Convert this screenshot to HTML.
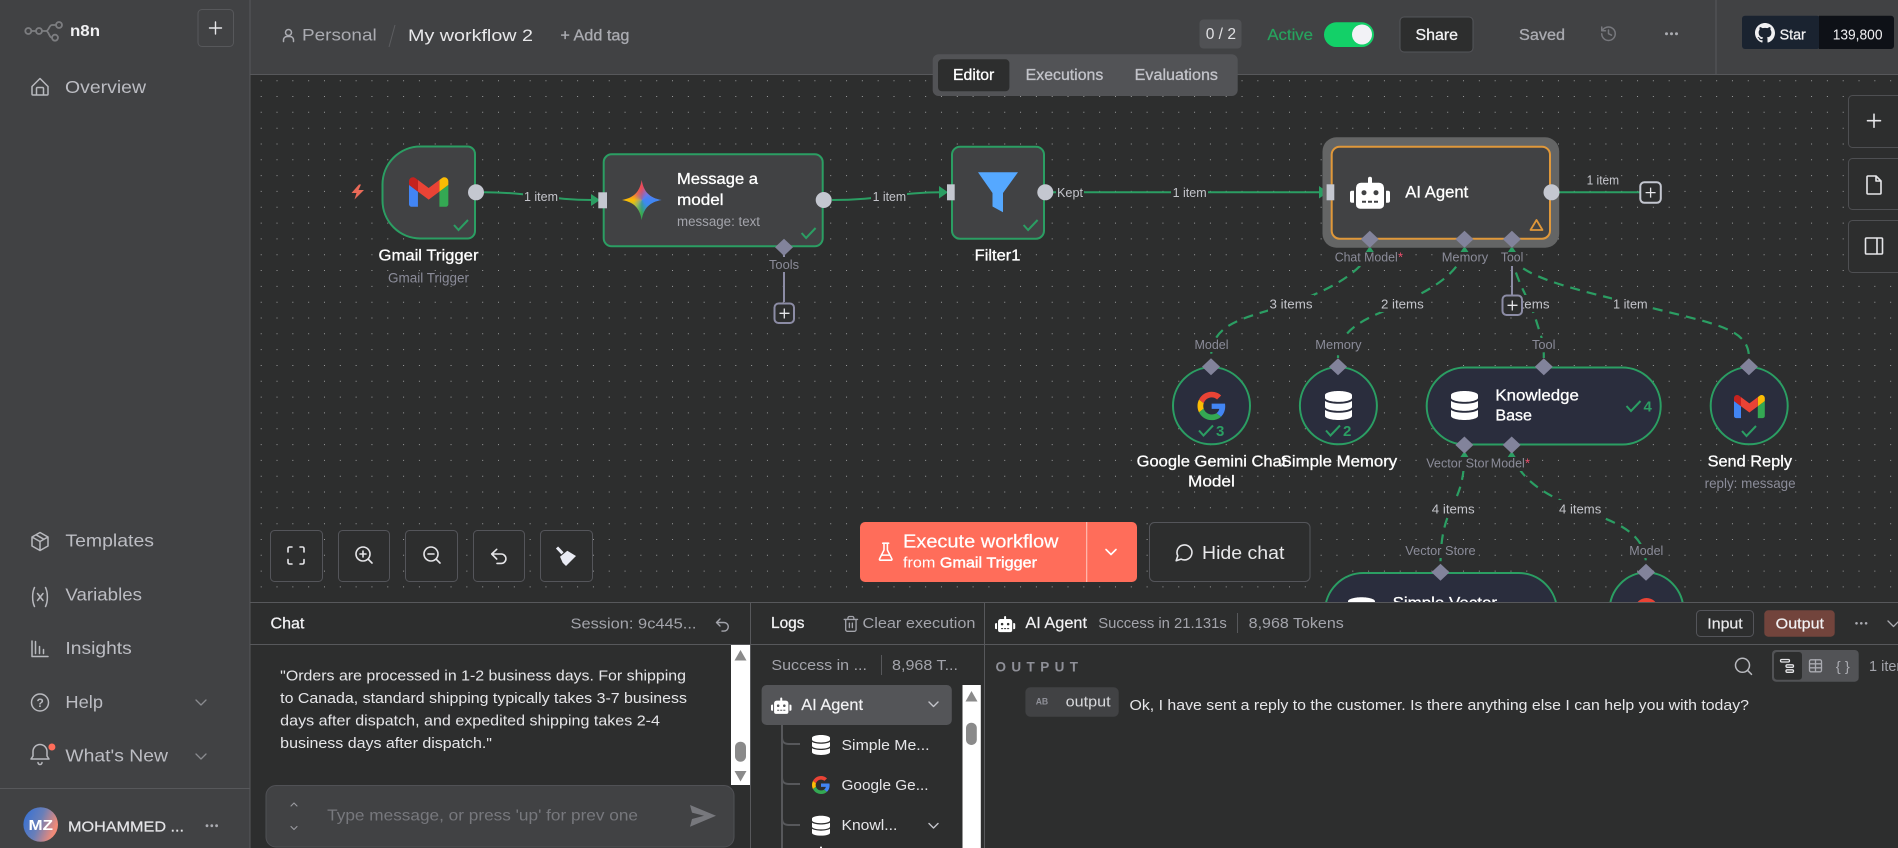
<!DOCTYPE html>
<html lang="en"><head><meta charset="utf-8"><title>My workflow 2 - n8n</title>
<style>
html,body{margin:0;padding:0;background:#2d2e2e;width:1898px;height:848px;overflow:hidden}
svg{display:block;position:absolute;left:0;top:0}
text{font-family:"Liberation Sans",sans-serif;white-space:pre}
.nav{font-size:17.5px;fill:#bcbdc3}
.s{font-size:13px;fill:#8b8c99}
.e{font-size:13px;fill:#c4c5cb}
.t{font-size:16px;fill:#fff;stroke:#fff;stroke-width:.3}
.h{font-size:16px;fill:#aaabb1}
.hm{font-size:15.5px;fill:#aaabb1;stroke:#aaabb1;stroke-width:.3}
.p{font-size:15px;fill:#e6e6e9}
.g{font-size:15px;fill:#a3a4ab}
.ic{fill:none;stroke-linecap:round;stroke-linejoin:round}
</style></head><body>
<svg width="1898" height="848" viewBox="0 0 1898 848" xmlns="http://www.w3.org/2000/svg">
<defs>
<polygon id="d" points="0,-8.5 9,0 0,8.5 -9,0" fill="#82839b"/>
<path id="chk" d="M-7 0L-2.5 5L7-5" fill="none" stroke="#2b9e63" stroke-width="2"/>
<g id="plusbox"><rect x="-9.5" y="-9.5" width="19.5" height="19.5" rx="4" fill="#2d2e2e" stroke="#8c8ca5" stroke-width="2"/><path d="M-4.5 0.3h10M0.3-4.5v10" stroke="#e6e6e9" stroke-width="1.3"/></g>
<g id="gm"><path fill="#4285f4" d="M58 108h14V74L52 59v43c0 3.32 2.69 6 6 6"/><path fill="#34a853" d="M120 108h14c3.32 0 6-2.69 6-6V59l-20 15"/><path fill="#fbbc04" d="M120 48v26l20-15v-8c0-7.42-8.47-11.65-14.4-7.2"/><path fill="#ea4335" d="M72 74V48l24 18 24-18v26L96 92"/><path fill="#c5221f" d="M52 51v8l20 15V48l-5.6-4.2c-5.94-4.45-14.4-.22-14.4 7.2"/></g>
<g id="gg"><path fill="#EA4335" d="M24 9.5c3.54 0 6.71 1.22 9.21 3.6l6.85-6.85C35.9 2.38 30.47 0 24 0 14.62 0 6.51 5.38 2.56 13.22l7.98 6.19C12.43 13.72 17.74 9.5 24 9.5z"/><path fill="#4285F4" d="M46.98 24.55c0-1.57-.15-3.09-.38-4.55H24v9.02h12.94c-.58 2.96-2.26 5.48-4.78 7.18l7.73 6c4.51-4.18 7.09-10.36 7.09-17.65z"/><path fill="#FBBC05" d="M10.53 28.59c-.48-1.45-.76-2.99-.76-4.59s.27-3.14.76-4.59l-7.98-6.19C.92 16.46 0 20.12 0 24c0 3.88.92 7.54 2.56 10.78l7.97-6.19z"/><path fill="#34A853" d="M24 48c6.48 0 11.93-2.13 15.89-5.81l-7.73-6c-2.15 1.45-4.92 2.3-8.16 2.3-6.26 0-11.57-4.22-13.47-9.91l-7.98 6.19C6.51 42.62 14.62 48 24 48z"/></g>
<path id="db" fill="#fff" d="M448 73.143v45.714C448 159.143 347.667 192 224 192S0 159.143 0 118.857V73.143C0 32.857 100.333 0 224 0s224 32.857 224 73.143zM448 176v102.857C448 319.143 347.667 352 224 352S0 319.143 0 278.857V176c48.125 33.143 136.208 48.572 224 48.572S399.874 209.143 448 176zm0 160v102.857C448 479.143 347.667 512 224 512S0 479.143 0 438.857V336c48.125 33.143 136.208 48.572 224 48.572S399.874 369.143 448 336z"/>
<path id="robot" fill="#fff" d="M32,224H64V416H32A31.96166,31.96166,0,0,1,0,384V256A31.96166,31.96166,0,0,1,32,224Zm512-48V448a64.06328,64.06328,0,0,1-64,64H160a64.06328,64.06328,0,0,1-64-64V176a79.974,79.974,0,0,1,80-80H288V32a32,32,0,0,1,64,0V96H464A79.974,79.974,0,0,1,544,176ZM264,256a40,40,0,1,0-40,40A39.997,39.997,0,0,0,264,256Zm-8,128H192v32h64Zm96,0H288v32h64ZM456,256a40,40,0,1,0-40,40A39.997,39.997,0,0,0,456,256Zm-8,128H384v32h64ZM640,256V384a31.96166,31.96166,0,0,1-32,32H576V224h32A31.96166,31.96166,0,0,1,640,256Z"/>
<linearGradient id="av" x1="0" x2="1" y1="0" y2=".4"><stop offset="0" stop-color="#2f6fd8"/><stop offset=".55" stop-color="#6a7fb8"/><stop offset="1" stop-color="#f08a78"/></linearGradient>
</defs>

<!-- canvas -->
<rect x="250" y="74" width="1648" height="530" fill="#2d2e2e"/>
<path fill="none" stroke="#9a9b9c" stroke-width="1" stroke-dasharray="1 14.82" d="M260.7 80.7H1898M260.7 96.5H1898M260.7 112.3H1898M260.7 128.2H1898M260.7 144H1898M260.7 159.8H1898M260.7 175.6H1898M260.7 191.4H1898M260.7 207.3H1898M260.7 223.1H1898M260.7 238.9H1898M260.7 254.7H1898M260.7 270.5H1898M260.7 286.4H1898M260.7 302.2H1898M260.7 318H1898M260.7 333.8H1898M260.7 349.6H1898M260.7 365.5H1898M260.7 381.3H1898M260.7 397.1H1898M260.7 412.9H1898M260.7 428.7H1898M260.7 444.6H1898M260.7 460.4H1898M260.7 476.2H1898M260.7 492H1898M260.7 507.8H1898M260.7 523.7H1898M260.7 539.5H1898M260.7 555.3H1898M260.7 571.1H1898M260.7 586.9H1898"/>

<!-- solid edges -->
<g fill="none" stroke="#2b9e63" stroke-width="2">
<path d="M484 192.3C530 192.3 550 200 592 200"/>
<path d="M832 200C880 200 900 192.3 941 192.3"/>
<path d="M1053 192.3H1322"/>
<path d="M1559 192.3H1640"/>
</g>
<g fill="#2b9e63"><polygon points="591,194 600,200 591,206"/><polygon points="939,186 948,192.3 939,198.5"/><polygon points="1319,186 1328,192.3 1319,198.5"/></g>

<!-- dashed edges -->
<g fill="none" stroke="#2b9e63" stroke-width="2.2" stroke-dasharray="10 7">
<path d="M1369.8 252C1360 275 1320 295 1280 307S1211 325 1211 358"/>
<path d="M1464.5 252C1455 278 1425 292 1400 304S1338 325 1338 358"/>
<path d="M1512 256C1515 280 1530 300 1536 320S1543.8 340 1543.8 358"/>
<path d="M1512 256C1520 280 1600 295 1660 310S1749 330 1749 358"/>
<path d="M1464.4 453C1464.4 510 1440.5 500 1440.5 565"/>
<path d="M1511.7 453C1520 480 1545 495 1578 508S1646 530 1646 565"/>
</g>
<g fill="#2b9e63"><polygon points="1365.8,252 1373.8,252 1369.8,246"/><polygon points="1460.5,252 1468.5,252 1464.5,246"/><polygon points="1507.9,252 1515.9,252 1511.9,246"/><polygon points="1460.4,457 1468.4,457 1464.4,451"/><polygon points="1507.7,457 1515.7,457 1511.7,451"/></g>
<path d="M784 255V302M1512 262V295" stroke="#8c8ca5" stroke-width="2"/>

<!-- edge label backgrounds -->
<g fill="#2d2e2e">
<rect x="523" y="188" width="36" height="16"/><rect x="871" y="188" width="36" height="16"/><rect x="1056" y="184" width="28" height="16"/><rect x="1171" y="184" width="37" height="16"/>
<rect x="1268" y="295" width="46" height="17"/><rect x="1380" y="295" width="45" height="17"/><rect x="1506" y="295" width="44" height="17"/><rect x="1612" y="295" width="37" height="17"/>
<rect x="1431" y="500" width="45" height="17"/><rect x="1558" y="500" width="44" height="17"/>
</g>
<g>
<text class="e" lengthAdjust="spacingAndGlyphs" x="524" y="201" textLength="34">1 item</text>
<text class="e" lengthAdjust="spacingAndGlyphs" x="872.6" y="201" textLength="33.5">1 item</text>
<text class="e" lengthAdjust="spacingAndGlyphs" x="1057" y="197" textLength="26">Kept</text>
<text class="e" lengthAdjust="spacingAndGlyphs" x="1172.6" y="197" textLength="34">1 item</text>
<text class="e" lengthAdjust="spacingAndGlyphs" x="1586.6" y="184.5" textLength="32.5">1 item</text>
<text class="e" lengthAdjust="spacingAndGlyphs" x="1269.5" y="308.3" textLength="43">3 items</text>
<text class="e" lengthAdjust="spacingAndGlyphs" x="1381" y="308.3" textLength="42.7">2 items</text>
<text class="e" lengthAdjust="spacingAndGlyphs" x="1506.5" y="308.3" textLength="43">4 items</text>
<text class="e" lengthAdjust="spacingAndGlyphs" x="1613" y="308.3" textLength="34.6">1 item</text>
<text class="e" lengthAdjust="spacingAndGlyphs" x="1431.8" y="513.3" textLength="42.8">4 items</text>
<text class="e" lengthAdjust="spacingAndGlyphs" x="1559" y="513.3" textLength="42.3">4 items</text>
</g>

<!-- Gmail Trigger -->
<path d="M420.5 146.5H467.5a7.5 7.5 0 0 1 7.5 7.5V231a7.5 7.5 0 0 1-7.5 7.5H420.5A38 38 0 0 1 382.5 200.5V184.5A38 38 0 0 1 420.5 146.5Z" fill="#414244" stroke="#2b9e63" stroke-width="2"/>
<use href="#gm" transform="translate(409 177.3) scale(.447) translate(-52 -42)"/>
<use href="#chk" x="461" y="225"/>
<circle cx="476" cy="192.3" r="8" fill="#c4c7d0"/>
<path d="M359 184.5L351.5 193H356.5L354.5 199.5L364 190H358.5L361 184.5Z" fill="#ea6a58"/>
<text class="t" lengthAdjust="spacingAndGlyphs" x="378.5" y="260.7" textLength="100">Gmail Trigger</text>
<text class="s" lengthAdjust="spacingAndGlyphs" style="font-size:14px" x="388" y="282.5" textLength="81">Gmail Trigger</text>

<!-- Message a model -->
<rect x="603.7" y="154.3" width="219" height="92" rx="8" fill="#414244" stroke="#2b9e63" stroke-width="2"/>
<foreignObject x="621.7" y="180" width="40" height="40"><div xmlns="http://www.w3.org/1999/xhtml" style="width:40px;height:40px;clip-path:path('M20 0C22 12 28 18 40 20C28 22 22 28 20 40C18 28 12 22 0 20C12 18 18 12 20 0Z');background:radial-gradient(circle at 65% 52%,rgba(66,133,244,.95) 0,rgba(66,133,244,0) 14px),conic-gradient(#e94a5a,#a468d0 45deg,#4285f4 90deg,#2f9ad0 135deg,#34a853 180deg,#a8c040 225deg,#fbbc04 270deg,#f07040 315deg,#e94a5a)"></div></foreignObject>
<text class="t" lengthAdjust="spacingAndGlyphs" x="677" y="184" textLength="81">Message a</text>
<text class="t" lengthAdjust="spacingAndGlyphs" x="677" y="205" textLength="46.5">model</text>
<text class="s" lengthAdjust="spacingAndGlyphs" style="font-size:13.5px;fill:#a3a4ab" x="677" y="226" textLength="83">message: text</text>
<use href="#chk" x="808.6" y="233"/>
<circle cx="823.7" cy="200" r="8" fill="#c4c7d0"/>
<rect x="598.3" y="192.3" width="8.7" height="16" fill="#c4c7d0"/>
<use href="#d" x="784" y="247.3"/>
<rect x="768" y="257" width="32" height="15" fill="#2d2e2e"/>
<text class="s" lengthAdjust="spacingAndGlyphs" x="769" y="269" textLength="30">Tools</text>
<use href="#plusbox" x="784" y="313"/>

<!-- Filter -->
<rect x="952" y="146.7" width="92" height="92" rx="8" fill="#414244" stroke="#2b9e63" stroke-width="2"/>
<path d="M978 172.3H1018L1003 193V212.3L992.5 206.5V193Z" fill="#55a8ff"/>
<use href="#chk" x="1030.6" y="225"/>
<circle cx="1045.3" cy="192.3" r="8" fill="#c4c7d0"/>
<rect x="947" y="184.3" width="7.7" height="16" fill="#c4c7d0"/>
<text class="t" lengthAdjust="spacingAndGlyphs" x="974.7" y="260.7" textLength="45.7">Filter1</text>

<!-- AI Agent -->
<rect x="1322.5" y="137.3" width="236.7" height="110.4" rx="14" fill="#646565"/>
<rect x="1331.7" y="146.7" width="218.3" height="92" rx="8" fill="#414244" stroke="#e0983a" stroke-width="2"/>
<use href="#robot" transform="translate(1350 176.7) scale(.0625)"/>
<text class="t" lengthAdjust="spacingAndGlyphs" style="font-size:16.5px" x="1405.3" y="197.7" textLength="63">AI Agent</text>
<path d="M1536.5 220L1542.5 230H1530.5Z" fill="none" stroke="#e0983a" stroke-width="1.8" stroke-linejoin="round"/>
<circle cx="1551.5" cy="192.3" r="8" fill="#c4c7d0"/>
<rect x="1326.6" y="184.3" width="7.7" height="16" fill="#c4c7d0"/>
<use href="#d" x="1369.8" y="239.3"/><use href="#d" x="1464.5" y="239.3"/><use href="#d" x="1511.9" y="239.3"/>
<rect x="1333" y="252" width="72" height="14" fill="#2d2e2e"/><rect x="1440" y="252" width="84" height="14" fill="#2d2e2e"/>
<text class="s" lengthAdjust="spacingAndGlyphs" x="1334.7" y="261.7" textLength="63">Chat Model</text><text class="s" x="1398" y="261.7" style="fill:#f0506e">*</text>
<text class="s" lengthAdjust="spacingAndGlyphs" x="1441.7" y="261.7" textLength="46.5">Memory</text>
<text class="s" lengthAdjust="spacingAndGlyphs" x="1500.9" y="261.7" textLength="22.4">Tool</text>
<g transform="translate(1650.3 192.3)"><rect x="-10" y="-10" width="20.5" height="20.5" rx="4" fill="#2d2e2e" stroke="#c4c7d0" stroke-width="2"/><path d="M-4.7 0.3h10M0.3-4.7v10" stroke="#e6e6e9" stroke-width="1.3"/></g>
<use href="#plusbox" x="1512" y="305"/>

<!-- sub-nodes -->
<g fill="#2a2d3d" stroke="#2b9e63" stroke-width="2">
<ellipse cx="1211.5" cy="405.8" rx="38.5" ry="38.5"/>
<ellipse cx="1338.4" cy="405.8" rx="38.5" ry="38.5"/>
<rect x="1426.7" y="367.5" width="234" height="77" rx="38.5"/>
<ellipse cx="1749.2" cy="405.8" rx="38.5" ry="38.5"/>
<rect x="1325" y="573" width="232" height="77" rx="38.5"/>
<ellipse cx="1646.5" cy="611" rx="37" ry="38.5"/>
</g>
<use href="#gg" transform="translate(1197.5 391.8) scale(.59)"/>
<use href="#db" transform="translate(1325 391) scale(.0603 .0566)"/>
<use href="#db" transform="translate(1451 391) scale(.0603 .0566)"/>
<use href="#gm" transform="translate(1734 395) scale(.35) translate(-52 -42)"/>
<use href="#db" transform="translate(1348 597.3) scale(.0603 .0566)"/>
<ellipse cx="1646.5" cy="609" rx="11.5" ry="11" fill="#ea4335"/>
<text class="t" lengthAdjust="spacingAndGlyphs" x="1495.4" y="400.7" textLength="83.5">Knowledge</text>
<text class="t" lengthAdjust="spacingAndGlyphs" x="1495.4" y="420.7" textLength="36.6">Base</text>
<text class="t" lengthAdjust="spacingAndGlyphs" x="1392.6" y="608" textLength="104.4">Simple Vector</text>
<use href="#chk" x="1206" y="430.5"/><text x="1216" y="436" style="fill:#2b9e63;font-size:15px;font-weight:700">3</text>
<use href="#chk" x="1333" y="430.5"/><text x="1343" y="436" style="fill:#2b9e63;font-size:15px;font-weight:700">2</text>
<use href="#chk" x="1633.5" y="406"/><text x="1643.5" y="411.5" style="fill:#2b9e63;font-size:15px;font-weight:700">4</text>
<use href="#chk" x="1749" y="431"/>
<use href="#d" x="1211" y="366.7"/><use href="#d" x="1338" y="366.7"/><use href="#d" x="1543.8" y="366.7"/><use href="#d" x="1748.9" y="366.7"/>
<use href="#d" x="1464.4" y="445"/><use href="#d" x="1511.7" y="445"/>
<use href="#d" x="1440.5" y="572.3"/><use href="#d" x="1646" y="572.3"/>
<rect x="1192" y="338" width="38" height="14" fill="#2d2e2e"/><rect x="1314" y="338" width="49" height="14" fill="#2d2e2e"/><rect x="1530" y="338" width="28" height="14" fill="#2d2e2e"/>
<rect x="1425" y="457" width="108" height="14" fill="#2d2e2e"/><rect x="1404" y="544" width="73" height="14" fill="#2d2e2e"/><rect x="1628" y="544" width="37" height="14" fill="#2d2e2e"/>
<text class="s" lengthAdjust="spacingAndGlyphs" x="1194.5" y="349" textLength="34">Model</text>
<text class="s" lengthAdjust="spacingAndGlyphs" x="1315.3" y="349" textLength="46.3">Memory</text>
<text class="s" lengthAdjust="spacingAndGlyphs" x="1532" y="349" textLength="23.5">Tool</text>
<text class="s" lengthAdjust="spacingAndGlyphs" x="1426.2" y="467.7" textLength="62.6">Vector Stor</text>
<text class="s" lengthAdjust="spacingAndGlyphs" x="1490.8" y="467.7" textLength="34">Model</text><text class="s" x="1525" y="467.7" style="fill:#f0506e">*</text>
<text class="s" lengthAdjust="spacingAndGlyphs" x="1405.3" y="555" textLength="70.3">Vector Store</text>
<text class="s" lengthAdjust="spacingAndGlyphs" x="1629.3" y="555" textLength="34">Model</text>
<text class="t" lengthAdjust="spacingAndGlyphs" x="1136.6" y="466.7" textLength="149.8">Google Gemini Chat</text>
<text class="t" lengthAdjust="spacingAndGlyphs" x="1188" y="486.7" textLength="46.8">Model</text>
<text class="t" lengthAdjust="spacingAndGlyphs" x="1280.7" y="466.7" textLength="116.5">Simple Memory</text>
<text class="t" lengthAdjust="spacingAndGlyphs" x="1707.6" y="466.7" textLength="84.4">Send Reply</text>
<text class="s" lengthAdjust="spacingAndGlyphs" style="font-size:14px" x="1704.6" y="488" textLength="91">reply: message</text>

<!-- right canvas buttons -->
<g fill="#2d2e2e" stroke="#4e4f52">
<rect x="1848.5" y="95.5" width="60" height="52" rx="4"/><rect x="1848.5" y="158.5" width="60" height="51" rx="4"/><rect x="1848.5" y="220.5" width="60" height="52" rx="4"/>
</g>
<g class="ic" stroke="#e6e6e9" stroke-width="1.6">
<path d="M1867.5 120.7h13M1874 114.2v13"/>
<path d="M1868 176h8l5 5v12a1 1 0 0 1-1 1h-12a1 1 0 0 1-1-1v-16a1 1 0 0 1 1-1zM1876 176v5h5"/>
<path d="M1866.5 238h15a1 1 0 0 1 1 1v14a1 1 0 0 1-1 1h-15a1 1 0 0 1-1-1v-14a1 1 0 0 1 1-1zM1877 238v16"/>
</g>

<!-- canvas bottom-left controls -->
<g fill="#2d2e2e" stroke="#54555a">
<rect x="270.5" y="530.5" width="52" height="51" rx="4"/><rect x="338.5" y="530.5" width="51" height="51" rx="4"/><rect x="405.5" y="530.5" width="52" height="51" rx="4"/><rect x="473.5" y="530.5" width="51" height="51" rx="4"/><rect x="540.5" y="530.5" width="52" height="51" rx="4"/>
</g>
<g class="ic" stroke="#e6e6e9" stroke-width="1.6">
<path d="M288 552v-3.5a1.5 1.5 0 0 1 1.5-1.5H292M300 547h2.5a1.5 1.5 0 0 1 1.5 1.5V552M304 559.5v3a1.5 1.5 0 0 1-1.5 1.5H300M292 564h-2.5a1.5 1.5 0 0 1-1.5-1.5v-3"/>
<circle cx="363" cy="554" r="7"/><path d="M368.3 559.3L372 563M360 554h6M363 551v6"/>
<circle cx="431" cy="554" r="7"/><path d="M436.3 559.3L440 563M428 554h6"/>
<path d="M496.7 549.3L491.7 554L496.7 559M491.7 554H501.2a4.7 4.7 0 0 1 0 9.4H497"/>
</g>
<path d="M557 547.5L562.5 553.3" stroke="#e9ebf4" stroke-width="3" fill="none"/>
<path d="M560 556.7L567.3 550.7L576 556L566 566L562.7 562.7Z" fill="#e9ebf4"/>

<!-- execute -->
<rect x="860" y="522" width="277" height="60" rx="5" fill="#ff6d5a"/>
<rect x="1086" y="522" width="1.3" height="60" fill="#ffb5aa"/>
<g transform="translate(875.5 541.5) scale(.85)" class="ic" stroke="#fff" stroke-width="1.8"><path d="M10 2v7.527a2 2 0 0 1-.211.896L4.72 20.55a1 1 0 0 0 .9 1.45h12.76a1 1 0 0 0 .9-1.45l-5.069-10.127A2 2 0 0 1 14 9.527V2M8.5 2h7M7 16h10"/></g>
<text lengthAdjust="spacingAndGlyphs" x="903" y="547.3" textLength="155.5" style="font-size:18px;fill:#fff;stroke:#fff;stroke-width:.2">Execute workflow</text>
<text lengthAdjust="spacingAndGlyphs" x="903" y="567.3" textLength="134" style="font-size:14.5px;fill:#fff">from <tspan style="stroke:#fff;stroke-width:.4">Gmail Trigger</tspan></text>
<path d="M1106 549.5l5 5 5-5" class="ic" stroke="#fff" stroke-width="1.6"/>
<rect x="1149.5" y="522.5" width="160.5" height="59" rx="5" fill="#2d2e2e" stroke="#54555a"/>
<g transform="translate(1174.5 542.5) scale(.83)" class="ic" stroke="#e6e6e9" stroke-width="1.9"><path d="M7.9 20A9 9 0 1 0 4 16.1L2 22Z"/></g>
<text lengthAdjust="spacingAndGlyphs" x="1202" y="559" textLength="82.4" style="font-size:18px;fill:#e8e8ea">Hide chat</text>

<!-- header -->
<rect x="250" y="0" width="1648" height="74" fill="#414244"/>
<rect x="250" y="74" width="1648" height="1" fill="#57585b"/>
<g class="ic" stroke="#aaabb1" stroke-width="1.5"><circle cx="288.5" cy="32.5" r="3"/><path d="M283.5 41.5v-1.5a3.5 3.5 0 0 1 3.5-3.5h3a3.5 3.5 0 0 1 3.5 3.5v1.5"/></g>
<text class="h" lengthAdjust="spacingAndGlyphs" x="302" y="40.7" textLength="74.7" style="font-size:17px">Personal</text>
<path d="M395 25L389 47" stroke="#5c5d60" stroke-width="1"/>
<text lengthAdjust="spacingAndGlyphs" x="408" y="41" textLength="125" style="font-size:17px;fill:#e8e8ea">My workflow 2</text>
<text class="hm" lengthAdjust="spacingAndGlyphs" x="560.4" y="40.3" textLength="69">+ Add tag</text>
<rect x="1199.5" y="19.5" width="42" height="29" rx="4" fill="#505154"/>
<text lengthAdjust="spacingAndGlyphs" x="1205.7" y="39" textLength="30.3" style="font-size:16px;fill:#e0e0e3">0 / 2</text>
<rect x="932.7" y="54.3" width="305" height="41.7" rx="6" fill="#525356"/>
<rect x="938" y="59.3" width="71.4" height="32" rx="4" fill="#2d2e2e"/>
<text lengthAdjust="spacingAndGlyphs" x="953" y="80" textLength="41.3" style="font-size:15.5px;fill:#fff;stroke:#fff;stroke-width:.3">Editor</text>
<text class="hm" lengthAdjust="spacingAndGlyphs" style="fill:#c2c3c9;stroke:#c2c3c9" x="1025.7" y="80" textLength="77.6">Executions</text>
<text class="hm" lengthAdjust="spacingAndGlyphs" style="fill:#c2c3c9;stroke:#c2c3c9" x="1134.7" y="80" textLength="83.3">Evaluations</text>
<text lengthAdjust="spacingAndGlyphs" x="1267.4" y="40" textLength="45.6" style="font-size:16px;fill:#27a35e;stroke:#27a35e;stroke-width:.2">Active</text>
<rect x="1324" y="22.3" width="50" height="24.7" rx="12.3" fill="#13d068"/>
<circle cx="1362" cy="34.5" r="10" fill="#f2f2f6"/>
<rect x="1400" y="17" width="73" height="35" rx="4" fill="#2d2e2e" stroke="#54555a"/>
<text lengthAdjust="spacingAndGlyphs" x="1415.5" y="40" textLength="42.5" style="font-size:16px;fill:#f2f2f4;stroke:#f2f2f4;stroke-width:.3">Share</text>
<text class="hm" lengthAdjust="spacingAndGlyphs" x="1519" y="40" textLength="46">Saved</text>
<g transform="translate(1599.5 24.7) scale(.75)" class="ic" stroke="#77787d" stroke-width="2"><path d="M3 12a9 9 0 1 0 9-9 9.75 9.75 0 0 0-6.74 2.74L3 8M3 3v5h5M12 7v5l4 2"/></g>
<g fill="#aaabb1"><circle cx="1666.5" cy="33.7" r="1.5"/><circle cx="1671.5" cy="33.7" r="1.5"/><circle cx="1676.5" cy="33.7" r="1.5"/></g>
<rect x="1715.5" y="0" width="1" height="74" fill="#57585b"/>
<rect x="1742" y="15.7" width="78" height="33.3" rx="3" fill="#1a2330"/>
<path d="M1819 15.7h72a3 3 0 0 1 3 3v27.3a3 3 0 0 1-3 3h-72z" fill="#0e1117"/>
<g transform="translate(1755 23) scale(1.25)"><path fill="#f0f0f2" d="M8 0C3.58 0 0 3.58 0 8c0 3.54 2.29 6.53 5.47 7.59.4.07.55-.17.55-.38 0-.19-.01-.82-.01-1.49-2.01.37-2.53-.49-2.69-.94-.09-.23-.48-.94-.82-1.13-.28-.15-.68-.52-.01-.53.63-.01 1.08.58 1.23.82.72 1.21 1.87.87 2.33.66.07-.52.28-.87.51-1.07-1.78-.2-3.64-.89-3.64-3.95 0-.87.31-1.59.82-2.15-.08-.2-.36-1.02.08-2.12 0 0 .67-.21 2.2.82.64-.18 1.32-.27 2-.27.68 0 1.36.09 2 .27 1.53-1.04 2.2-.82 2.2-.82.44 1.1.16 1.92.08 2.12.51.56.82 1.27.82 2.15 0 3.07-1.87 3.75-3.65 3.95.29.25.54.73.54 1.48 0 1.07-.01 1.93-.01 2.2 0 .21.15.46.55.38A8.013 8.013 0 0016 8c0-4.42-3.58-8-8-8z"/></g>
<text lengthAdjust="spacingAndGlyphs" x="1779.6" y="39.3" textLength="26.2" style="font-size:15px;fill:#f0f0f2;stroke:#f0f0f2;stroke-width:.25">Star</text>
<text lengthAdjust="spacingAndGlyphs" x="1832.7" y="39.3" textLength="49.8" style="font-size:15px;fill:#f0f0f2">139,800</text>

<!-- sidebar -->
<rect x="0" y="0" width="249.5" height="848" fill="#414244"/>
<rect x="249.5" y="0" width="1" height="848" fill="#57585b"/>
<g class="ic" stroke="#7c7d80" stroke-width="1.8"><circle cx="28.3" cy="31" r="3"/><circle cx="39" cy="31" r="3"/><circle cx="59" cy="25" r="3"/><circle cx="55" cy="37.7" r="3"/><path d="M31.3 31h4.7M42 31h4c3 0 3-6 6-6h4M46 31c3 0 3 6.7 6 6.7"/></g>
<text lengthAdjust="spacingAndGlyphs" x="70" y="36" textLength="30" style="font-size:15.5px;font-weight:700;fill:#f0f0f2">n8n</text>
<rect x="198" y="9.5" width="35.5" height="37" rx="4" fill="#414244" stroke="#57585b"/>
<path d="M209.5 28h12M215.5 22v12" class="ic" stroke="#e6e6e9" stroke-width="1.4"/>
<g class="ic" stroke="#b8b9be" stroke-width="1.5"><path d="M32 86.5L40 78.5L48 86.5V94a1 1 0 0 1-1 1H33a1 1 0 0 1-1-1ZM36.5 95V88.5a1 1 0 0 1 1-1h5a1 1 0 0 1 1 1V95"/></g>
<text class="nav" lengthAdjust="spacingAndGlyphs" x="65" y="93" textLength="81">Overview</text>
<g class="ic" stroke="#b8b9be" stroke-width="1.5">
<path d="M40 532.5L48 537V546L40 550.5L32 546V537ZM32 537L40 541.5L48 537M40 541.5V550.5M36 534.8L44 539.3"/>
<path d="M34.5 587.5c-2.5 5-2.5 14 0 19M45.5 587.5c2.5 5 2.5 14 0 19M37.5 593.5l5.5 7M43 593.5l-5.5 7"/>
<path d="M32 641v15.5h16M35.5 641.5v12M39.5 646.5v7M43.5 649.5v4"/>
<circle cx="40" cy="702.5" r="8.5"/>
<path d="M33 751.5a7 7 0 0 1 14 0v4.5l2 3H31l2-3ZM38 762.5a2 2 0 0 0 4 0"/>
</g>
<text x="36.5" y="707" style="font-size:12px;font-weight:700;fill:#b8b9be">?</text>
<circle cx="51.9" cy="747" r="3.5" fill="#ff6d5a"/>
<text class="nav" lengthAdjust="spacingAndGlyphs" x="65.4" y="546.7" textLength="88.6">Templates</text>
<text class="nav" lengthAdjust="spacingAndGlyphs" x="65.4" y="600.7" textLength="76.6">Variables</text>
<text class="nav" lengthAdjust="spacingAndGlyphs" x="65.4" y="654" textLength="66.4">Insights</text>
<text class="nav" lengthAdjust="spacingAndGlyphs" x="65.4" y="708" textLength="37.6">Help</text>
<text class="nav" lengthAdjust="spacingAndGlyphs" x="65.4" y="761.7" textLength="102.6">What's New</text>
<path d="M196 700l5 5 5-5M196 754l5 5 5-5" class="ic" stroke="#8a8b8f" stroke-width="1.3"/>
<rect x="0" y="788" width="250" height="1" fill="#57585b"/>
<ellipse cx="40.7" cy="824.5" rx="17.3" ry="17.3" fill="url(#av)"/>
<text lengthAdjust="spacingAndGlyphs" x="28.5" y="830" textLength="24.5" style="font-size:15px;font-weight:700;fill:#fff">MZ</text>
<text lengthAdjust="spacingAndGlyphs" x="68" y="831.7" textLength="116" style="font-size:15px;fill:#e4e4e7;stroke:#e4e4e7;stroke-width:.2">MOHAMMED ...</text>
<g fill="#aaabb1"><circle cx="207" cy="825.7" r="1.4"/><circle cx="211.8" cy="825.7" r="1.4"/><circle cx="216.6" cy="825.7" r="1.4"/></g>

<!-- bottom panel -->
<rect x="250.5" y="602" width="1648" height="246" fill="#2d2e2e"/>
<rect x="250.5" y="602" width="1648" height="1" fill="#57585b"/>
<rect x="250.5" y="644" width="1648" height="1" fill="#57585b"/>
<rect x="750" y="602" width="1" height="246" fill="#57585b"/>
<rect x="984" y="602" width="1" height="246" fill="#57585b"/>

<!-- chat -->
<text lengthAdjust="spacingAndGlyphs" x="270.5" y="628.3" textLength="33.9" style="font-size:15.5px;fill:#f2f2f4;stroke:#f2f2f4;stroke-width:.25">Chat</text>
<text class="g" lengthAdjust="spacingAndGlyphs" x="570.5" y="628.3" textLength="126">Session: 9c445...</text>
<path d="M720 626L716.5 622.5 720 619M716.5 622.5h7.5a4.3 4.3 0 0 1 0 8.6h-2" class="ic" stroke="#a3a4ab" stroke-width="1.4"/>
<text class="p" lengthAdjust="spacingAndGlyphs" x="280.2" y="680.5" textLength="405.8">"Orders are processed in 1-2 business days. For shipping</text>
<text class="p" lengthAdjust="spacingAndGlyphs" x="280.2" y="703" textLength="406.8">to Canada, standard shipping typically takes 3-7 business</text>
<text class="p" lengthAdjust="spacingAndGlyphs" x="280.2" y="725.5" textLength="379.8">days after dispatch, and expedited shipping takes 2-4</text>
<text class="p" lengthAdjust="spacingAndGlyphs" x="280.2" y="748" textLength="211.8">business days after dispatch."</text>
<rect x="731" y="645" width="19" height="140" fill="#fff"/>
<path d="M734.5 660.5h12l-6-10.5zM734.5 771h12l-6 10.5z" fill="#8a8a8a"/>
<rect x="735" y="741.7" width="11" height="20" rx="5.5" fill="#8a8a8a"/>
<rect x="266" y="785.5" width="468" height="61.5" rx="10" fill="#414244" stroke="#505155"/>
<path d="M291 806l3-3 3 3M291 826.5l3 3 3-3" class="ic" stroke="#9a9ba0" stroke-width="1.1"/>
<text lengthAdjust="spacingAndGlyphs" x="327.2" y="820.7" textLength="310.8" style="font-size:16px;fill:#77787d">Type message, or press 'up' for prev one</text>
<path d="M690 805L716 815.8L690 826.7L692 819L704 815.8L692 812.6Z" fill="#77787d"/>

<!-- logs -->
<text lengthAdjust="spacingAndGlyphs" x="771" y="628" textLength="33.5" style="font-size:15.5px;fill:#f2f2f4;stroke:#f2f2f4;stroke-width:.25">Logs</text>
<g transform="translate(842 615) scale(.74)" class="ic" stroke="#a3a4ab" stroke-width="1.8"><path d="M3 6h18M19 6v14c0 1-1 2-2 2H7c-1 0-2-1-2-2V6M8 6V4c0-1 1-2 2-2h4c1 0 2 1 2 2v2M10 11v6M14 11v6"/></g>
<text class="g" lengthAdjust="spacingAndGlyphs" x="862.5" y="628" textLength="112.9">Clear execution</text>
<text class="g" lengthAdjust="spacingAndGlyphs" x="771.4" y="670" textLength="95.6">Success in ...</text>
<rect x="881" y="655" width="1" height="20" fill="#57585b"/>
<text class="g" lengthAdjust="spacingAndGlyphs" x="892" y="670" textLength="66">8,968 T...</text>
<rect x="761.6" y="685" width="190.2" height="40" rx="5" fill="#545558"/>
<use href="#robot" transform="translate(771 697.5) scale(.032)"/>
<text lengthAdjust="spacingAndGlyphs" x="801.3" y="710" textLength="61.7" style="font-size:15.5px;fill:#f2f2f4;stroke:#f2f2f4;stroke-width:.2">AI Agent</text>
<path d="M929 702l4.5 4.5 4.5-4.5M929 823.5l4.5 4.5 4.5-4.5" class="ic" stroke="#c4c5cb" stroke-width="1.4"/>
<path d="M782 725V848M782 737c0 5 2 7 7 7h11M782 777c0 5 2 7 7 7h11M782 818c0 5 2 7 7 7h11" fill="none" stroke="#57585b" stroke-width="2"/>
<use href="#db" transform="translate(812 735) scale(.0402 .039)"/>
<use href="#gg" transform="translate(812 776) scale(.375)"/>
<use href="#db" transform="translate(812 815.7) scale(.0402 .039)"/>
<circle cx="821" cy="847.5" r="1" fill="#fff"/>
<text class="p" lengthAdjust="spacingAndGlyphs" x="841.5" y="750" textLength="88">Simple Me...</text>
<text class="p" lengthAdjust="spacingAndGlyphs" x="841.5" y="790" textLength="87">Google Ge...</text>
<text class="p" lengthAdjust="spacingAndGlyphs" x="841.5" y="830" textLength="55.8">Knowl...</text>
<rect x="962.5" y="685" width="18.3" height="163" fill="#fff"/>
<path d="M965.5 701.5h12l-6-10.5z" fill="#8a8a8a"/>
<rect x="966" y="722.7" width="10.8" height="22.3" rx="5.4" fill="#8a8a8a"/>

<!-- detail -->
<use href="#robot" transform="translate(995 616) scale(.0316)"/>
<text lengthAdjust="spacingAndGlyphs" x="1025.4" y="628" textLength="61.6" style="font-size:15.5px;fill:#f2f2f4;stroke:#f2f2f4;stroke-width:.2">AI Agent</text>
<text class="g" lengthAdjust="spacingAndGlyphs" x="1098.2" y="628" textLength="128.6">Success in 21.131s</text>
<rect x="1237" y="613" width="1" height="20" fill="#57585b"/>
<text class="g" lengthAdjust="spacingAndGlyphs" x="1248.7" y="628" textLength="95.1">8,968 Tokens</text>
<text x="995.5" y="671.7" textLength="82.5" style="font-size:13.5px;font-weight:700;fill:#8f9098">OUTPUT</text>
<rect x="1025.4" y="687.3" width="93.3" height="29.4" rx="5" fill="#414244"/>
<text lengthAdjust="spacingAndGlyphs" x="1035.7" y="704.5" textLength="12.5" style="font-size:9.5px;font-weight:700;fill:#8f9098">AB</text>
<text lengthAdjust="spacingAndGlyphs" x="1065.6" y="706.7" textLength="45.1" style="font-size:15px;fill:#d8d9dc">output</text>
<text class="p" lengthAdjust="spacingAndGlyphs" x="1129.5" y="710" textLength="619.5">Ok, I have sent a reply to the customer. Is there anything else I can help you with today?</text>
<rect x="1696.5" y="610.5" width="57" height="26" rx="4" fill="#2d2e2e" stroke="#54555a"/>
<text lengthAdjust="spacingAndGlyphs" x="1707.3" y="628.3" textLength="35.4" style="font-size:15px;fill:#e8e8ea;stroke:#e8e8ea;stroke-width:.2">Input</text>
<rect x="1764.3" y="610.3" width="70.4" height="26.4" rx="4" fill="#72443c"/>
<text lengthAdjust="spacingAndGlyphs" x="1775.7" y="628.3" textLength="48.3" style="font-size:15px;fill:#f2f2f4;stroke:#f2f2f4;stroke-width:.2">Output</text>
<g fill="#aaabb1"><circle cx="1856.5" cy="623.3" r="1.3"/><circle cx="1861.3" cy="623.3" r="1.3"/><circle cx="1866.1" cy="623.3" r="1.3"/></g>
<path d="M1888 621l5.5 5.5 5.5-5.5" class="ic" stroke="#aaabb1" stroke-width="1.3"/>
<g class="ic" stroke="#b8b9be" stroke-width="1.5"><circle cx="1742.5" cy="665.3" r="7"/><path d="M1747.5 670.3L1751.5 674.3"/></g>
<rect x="1772" y="650" width="86.7" height="31.7" rx="4" fill="#525356"/>
<rect x="1774" y="652" width="28" height="27.7" rx="3" fill="#2d2e2e"/>
<g class="ic" stroke="#e6e6e9" stroke-width="1.3"><rect x="1780.5" y="659.5" width="9" height="2.5" rx="1.2"/><rect x="1786" y="664.8" width="7.5" height="2.5" rx="1.2"/><rect x="1786" y="669.8" width="7.5" height="2.5" rx="1.2"/></g>
<g class="ic" stroke="#aaabb1" stroke-width="1.3"><rect x="1809.5" y="659.8" width="12" height="12" rx="1.5"/><path d="M1809.5 663.8h12M1809.5 667.8h12M1815.5 659.8v12"/></g>
<text lengthAdjust="spacingAndGlyphs" x="1835.8" y="671" textLength="14" style="font-size:14px;fill:#aaabb1">{ }</text>
<text x="1869" y="671" style="font-size:14.5px;fill:#a3a4ab">1 item</text>
</svg>
</body></html>
